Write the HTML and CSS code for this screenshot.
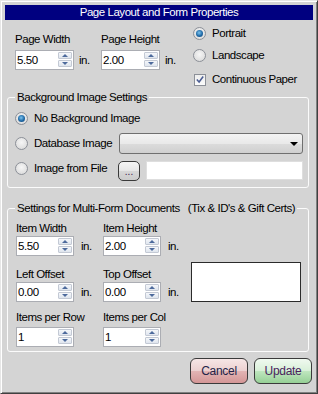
FILE: index.html
```html
<html>
    <head>
        <link rel="stylesheet" href="styles.css">
    </head>
    <body>
        <div class="window">
            <div class="title">Page Layout and Form Properties</div>

            <div class="page-row">
                <div class="field page-w1">
                    <div class="label">Page Width</div>
                    <div class="spin-row">
                        <div class="spin"><span class="val">5.50</span><span class="arrows"><i class="up"></i><i class="down"></i></span></div>
                        <span class="unit">in.</span>
                    </div>
                </div>
                <div class="field page-w2">
                    <div class="label">Page Height</div>
                    <div class="spin-row">
                        <div class="spin"><span class="val">2.00</span><span class="arrows"><i class="up"></i><i class="down"></i></span></div>
                        <span class="unit">in.</span>
                    </div>
                </div>
                <div class="opts">
                    <div class="opt"><span class="radio on"></span>Portrait</div>
                    <div class="opt"><span class="radio"></span>Landscape</div>
                    <div class="opt opt-check">
                        <span class="check"><svg width="11" height="11" viewBox="0 0 11 11"><path d="M2 5.5 L4.5 8.2 L9 2.2" fill="none" stroke="#4b5d93" stroke-width="1.7"/></svg></span>Continuous Paper
                    </div>
                </div>
            </div>

            <fieldset class="group bg-group">
                <legend>Background Image Settings</legend>
                <div class="bg-row">
                    <div class="opt"><span class="radio on"></span>No Background Image</div>
                </div>
                <div class="bg-row row-db">
                    <div class="opt bg-label"><span class="radio"></span>Database Image</div>
                    <div class="select"><span class="caret"></span></div>
                </div>
                <div class="bg-row row-file">
                    <div class="opt bg-label file-label"><span class="radio"></span>Image from File</div>
                    <div class="dots-btn">...</div>
                    <div class="textbox"></div>
                </div>
            </fieldset>

            <fieldset class="group multi-group">
                <legend>Settings for Multi-Form Documents<span class="legend-note">(Tix &amp; ID's &amp; Gift Certs)</span></legend>
                <div class="multi-row">
                    <div class="field item-w1">
                        <div class="label">Item Width</div>
                        <div class="spin-row">
                            <div class="spin"><span class="val">5.50</span><span class="arrows"><i class="up"></i><i class="down"></i></span></div>
                            <span class="unit">in.</span>
                        </div>
                    </div>
                    <div class="field item-w2">
                        <div class="label">Item Height</div>
                        <div class="spin-row">
                            <div class="spin"><span class="val">2.00</span><span class="arrows"><i class="up"></i><i class="down"></i></span></div>
                            <span class="unit">in.</span>
                        </div>
                    </div>
                </div>
                <div class="multi-row row-offset">
                    <div class="field item-w1">
                        <div class="label">Left Offset</div>
                        <div class="spin-row">
                            <div class="spin"><span class="val">0.00</span><span class="arrows"><i class="up"></i><i class="down"></i></span></div>
                            <span class="unit">in.</span>
                        </div>
                    </div>
                    <div class="field item-w2">
                        <div class="label">Top Offset</div>
                        <div class="spin-row">
                            <div class="spin"><span class="val">0.00</span><span class="arrows"><i class="up"></i><i class="down"></i></span></div>
                            <span class="unit">in.</span>
                        </div>
                    </div>
                    <div class="preview"></div>
                </div>
                <div class="multi-row row-count">
                    <div class="field item-w1">
                        <div class="label">Items per Row</div>
                        <div class="spin-row">
                            <div class="spin"><span class="val">1</span><span class="arrows"><i class="up"></i><i class="down"></i></span></div>
                        </div>
                    </div>
                    <div class="field item-w2">
                        <div class="label">Items per Col</div>
                        <div class="spin-row">
                            <div class="spin"><span class="val">1</span><span class="arrows"><i class="up"></i><i class="down"></i></span></div>
                        </div>
                    </div>
                </div>
            </fieldset>

            <div class="actions">
                <button class="btn cancel">Cancel</button>
                <button class="btn update">Update</button>
            </div>
        </div>
    </body>
</html>
```

FILE: styles.css
```css
body {
    margin: 0;
    font-family: "Liberation Sans", Arial, sans-serif;
    font-size: 11.5px;
    letter-spacing: -0.45px;
    color: #000;
}
.window {
    width: 318px;
    height: 394px;
    box-sizing: border-box;
    background: #d4d4d4;
    border: 1px solid;
    border-color: #e6e6e6 #404040 #404040 #e6e6e6;
    box-shadow: inset 1px 1px #fff, inset -1px -1px #808080;
    padding: 4px;
}
.title {
    height: 15px;
    line-height: 15px;
    background: #000080;
    color: #fff;
    text-align: center;
}

/* top section */
.page-row {
    display: flex;
    margin-top: 7px;
    padding-left: 10px;
}
.page-row .field {
    padding-top: 6px;
}
.page-row .label {
    margin-bottom: 4px;
}
.page-w1 {
    width: 86px;
}
.page-w2 {
    width: 92px;
}
.label {
    height: 13px;
    line-height: 13px;
    white-space: nowrap;
}
.spin-row {
    display: flex;
    align-items: center;
    gap: 5px;
}
.spin {
    width: 59px;
    height: 20px;
    box-sizing: border-box;
    border: 1px solid #abadb3;
    background: #fff;
    display: flex;
}
.spin .val {
    flex: 1;
    padding-left: 1px;
    line-height: 18px;
}
.arrows {
    width: 14px;
    display: flex;
    flex-direction: column;
    gap: 1px;
    padding: 1px 1px 2px 0;
}
.arrows i {
    flex: 1;
    display: flex;
    align-items: center;
    justify-content: center;
    border: 1px solid #c3c9d4;
    border-radius: 1px;
    background: linear-gradient(#f5f7fa, #dfe5ee);
}
.arrows i::after {
    content: "";
    border-left: 3px solid transparent;
    border-right: 3px solid transparent;
}
.arrows .up::after {
    border-bottom: 3px solid #4d6a9c;
}
.arrows .down::after {
    border-top: 3px solid #4d6a9c;
}
.unit {
    line-height: 13px;
    padding-top: 1px;
}

/* radio + checkbox */
.opts {
    display: flex;
    flex-direction: column;
}
.opt {
    display: flex;
    align-items: center;
    gap: 6px;
    height: 13px;
    line-height: 13px;
    white-space: nowrap;
}
.opts .opt + .opt {
    margin-top: 9px;
}
.opts .opt-check {
    margin-top: 11px !important;
    padding-left: 1px;
}
.radio {
    width: 13px;
    height: 13px;
    box-sizing: border-box;
    border-radius: 50%;
    border: 1px solid #8c9098;
    background: radial-gradient(circle at 50% 40%, #f6f6f6, #d6d6d6);
    display: flex;
    align-items: center;
    justify-content: center;
    flex: none;
}
.radio.on::after {
    content: "";
    width: 7px;
    height: 7px;
    border-radius: 50%;
    background: radial-gradient(circle at 45% 40%, #7cc4ef, #1f69a6 55%, #123f6d);
}
.check {
    width: 12px;
    height: 12px;
    box-sizing: border-box;
    border: 1px solid #8c9098;
    background: linear-gradient(#eeeeee, #fbfbfb);
    display: flex;
    align-items: center;
    justify-content: center;
    flex: none;
}

/* group boxes */
.group {
    margin: 0 0 0 2px;
    width: 302px;
    box-sizing: border-box;
    border: 1px solid #fbfbfb;
    border-radius: 3px;
    min-width: 0;
}
.group legend {
    height: 13px;
    line-height: 13px;
    padding: 0 2px;
    white-space: nowrap;
}
.bg-group {
    margin-top: 5px;
    padding: 4px 5px 6px 7px;
}
.bg-row {
    display: flex;
    align-items: center;
    height: 21px;
}
.row-db {
    margin-top: 4px;
}
.row-file {
    margin-top: 6px;
}
.bg-label {
    width: 104px;
}
.file-label {
    width: 103px;
    margin-top: -4px;
}
.select {
    flex: 1;
    height: 21px;
    box-sizing: border-box;
    border: 1px solid #6f6f6f;
    border-radius: 3px;
    background: linear-gradient(#f3f3f3, #e9e9e9 50%, #dcdcdc 51%, #cfcfcf);
    display: flex;
    align-items: center;
    justify-content: flex-end;
    padding-right: 4px;
}
.caret {
    border-left: 4px solid transparent;
    border-right: 4px solid transparent;
    border-top: 4px solid #000;
    margin-top: 1px;
}
.dots-btn {
    width: 22px;
    height: 20px;
    box-sizing: border-box;
    border: 1px solid #3a3a3a;
    border-radius: 5px;
    background: linear-gradient(#f4f4f4, #e6e6e6 50%, #d7d7d7 51%, #cbcbcb);
    color: #40204a;
    font-size: 10px;
    letter-spacing: 0;
    line-height: 20px;
    text-align: center;
    margin-right: 6px;
}
.textbox {
    flex: 1;
    height: 19px;
    box-sizing: border-box;
    border: 1px solid #dedede;
    background: #fff;
}

.multi-group {
    margin-top: 14px;
    padding: 7px 5px 4px 8px;
}
.multi-group legend {
    margin-left: -1px;
}
.legend-note {
    margin-left: 8px;
}
.multi-row {
    display: flex;
    align-items: flex-end;
}
.multi-row .label {
    margin-bottom: 1px;
}
.multi-row .spin {
    width: 58px;
}
.multi-row .spin-row {
    gap: 7px;
}
.row-offset {
    margin-top: 6px;
}
.row-count {
    margin-top: 9px;
}
.row-count .label {
    margin-bottom: 3px;
}
.item-w1 {
    width: 87px;
}
.item-w2 {
    width: 88px;
}
.preview {
    width: 110px;
    height: 40px;
    box-sizing: border-box;
    border: 1px solid #2b2b2b;
    background: #fff;
}

/* buttons */
.actions {
    display: flex;
    justify-content: flex-end;
    gap: 6px;
    margin-top: 6px;
    padding-right: 1px;
}
.btn {
    width: 58px;
    height: 26px;
    border: 1px solid #3a3a3a;
    border-radius: 6px;
    font-family: "Liberation Sans", Arial, sans-serif;
    font-size: 12px;
    letter-spacing: -0.3px;
    padding: 0;
}
.cancel {
    color: #232348;
    background: linear-gradient(#f6e6e6, #ecd0d0 50%, #e2b4b4 51%, #d49696);
}
.update {
    color: #4a1f5e;
    background: linear-gradient(#f0f9f0, #d8f0d8 50%, #bfe6bf 51%, #96d096);
}
```
